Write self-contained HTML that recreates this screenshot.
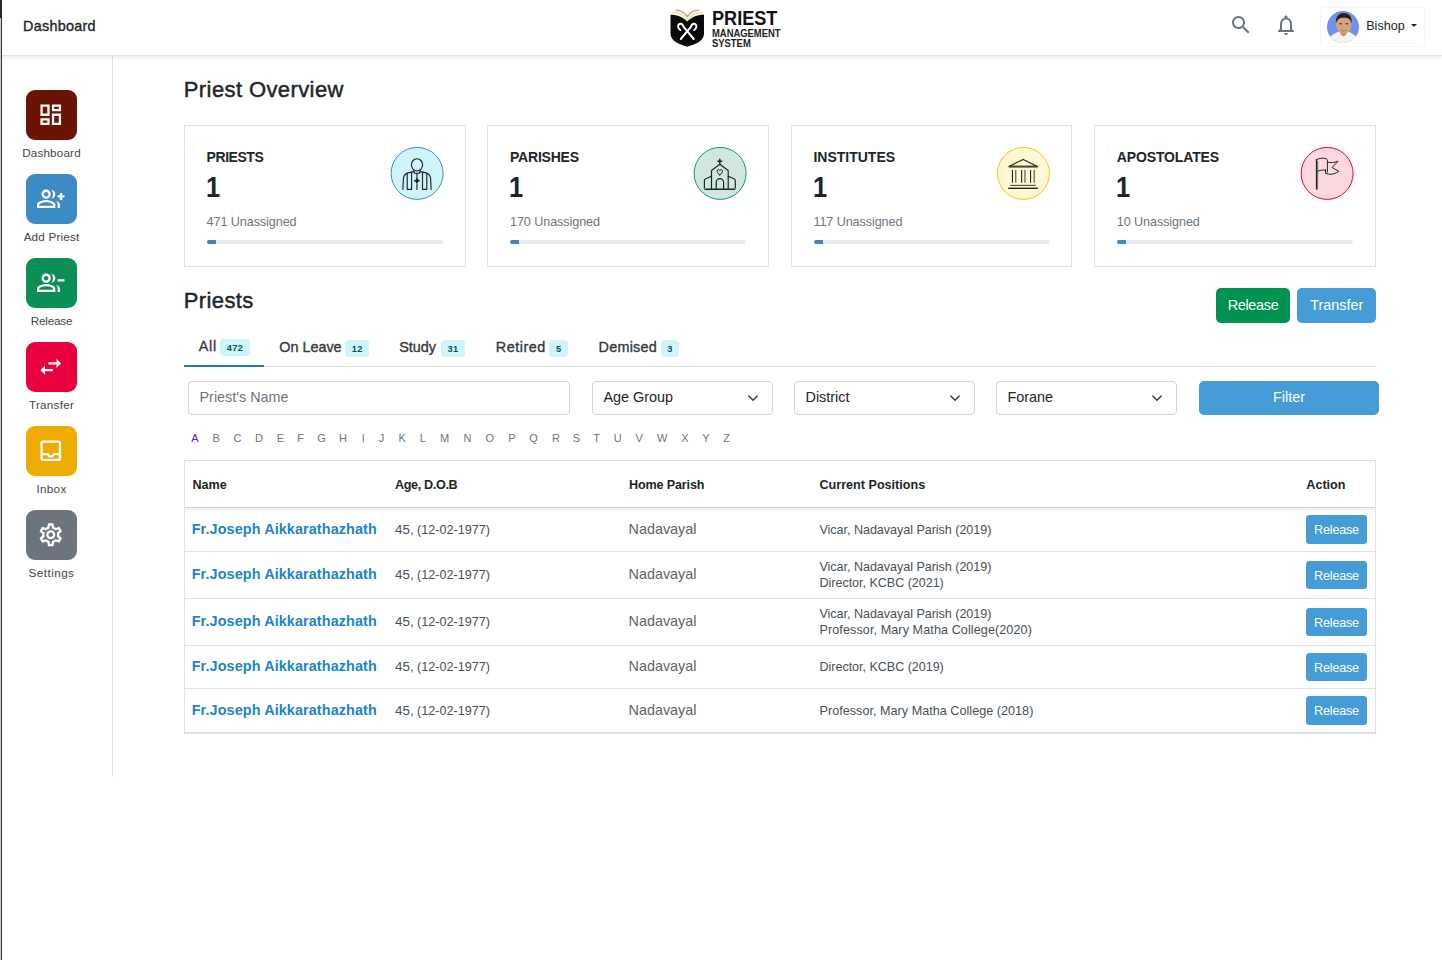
<!DOCTYPE html>
<html lang="en">
<head>
<meta charset="utf-8">
<title>Priest Management System - Dashboard</title>
<style>
*{box-sizing:border-box;margin:0;padding:0}
html,body{width:1442px;height:960px;overflow:hidden;background:#fff}
body{font-family:"Liberation Sans",sans-serif;font-size:14.4px;color:#212529;position:relative;-webkit-font-smoothing:antialiased}
.abs{position:absolute}
.t{position:absolute;white-space:nowrap;line-height:1}
/* window edge artefact */
#edgeTop{left:0;top:0;width:2px;height:18px;background:#2b2b2b}
#edgeA{left:0;top:18px;width:1px;height:942px;background:#cfcfcf}
#edgeB{left:1px;top:18px;width:1px;height:942px;background:#333}
/* header */
#hdr{left:2px;top:0;width:1440px;height:56px;background:#fff;border-bottom:1px solid #dfe2e7;box-shadow:0 2px 4px rgba(0,0,0,.075);z-index:5}
#hdrTitle{left:21.100px;top:18.500px;font-size:14.400px;font-weight:400;color:#212529;-webkit-text-stroke:.35px #212529;letter-spacing:.25px}
/* sidebar */
#side{left:2px;top:56px;width:111px;height:721px;border-right:1px solid #dee2e6;background:#fff}
.tile{position:absolute;left:26px;width:51px;height:50px;border-radius:9px}
.tile svg{position:absolute;left:11.400px;top:10.700px;width:27.500px;height:27.500px;fill:#fff}
.lbl{position:absolute;left:2px;width:100px;text-align:center;font-size:11.700px;line-height:14px;color:#454545}
/* headings */
.h3{font-size:22px;font-weight:400;color:#212529;-webkit-text-stroke:.45px #212529;letter-spacing:.4px}
/* cards */
.card{position:absolute;top:125px;width:281.8px;height:142px;border:1px solid #dee2e6;background:#fff}
.card .ttl{left:var(--tl);top:24.300px;font-size:14px;font-weight:700;color:#212529}
.card .num{left:calc(var(--tl) - .6px);top:45.600px;font-size:30px;font-weight:700;color:#212529;transform:scaleX(.85);transform-origin:0 0}
.card .sub{left:var(--tl);top:90px;font-size:12.600px;color:#6c757d;letter-spacing:-.08px}
.card .bar{position:absolute;left:calc(var(--tl) + .4px);top:114px;width:236px;height:4px;border-radius:2px;background:#e9ecef;overflow:hidden}
.card .bar i{display:block;width:9px;height:4px;background:#3a87c2}
.card .ico{position:absolute;left:var(--il);top:20px;width:55px;height:55px}
.card .ico svg{position:absolute;left:0;top:0;width:55px;height:55px;overflow:visible}
/* buttons */
.btn{position:absolute;color:#fff;text-align:center;border-radius:5px;font-size:14.4px;white-space:nowrap}
.b-green{background:#009250}
.b-blue{background:#459cd6}
/* tabs */
#tabline{left:184px;top:366px;width:1192px;height:1px;background:#dee2e6}
#tabactive{left:184px;top:365px;width:80px;height:2px;background:#2a7ab8}
.tab{font-size:14.4px;color:#343a40;-webkit-text-stroke:.35px #343a40}
.bdg{position:absolute;top:339px;height:17px;border-radius:4px;background:#cff4fc;color:#055160;font-size:9.200px;font-weight:700;text-align:center;line-height:17px;letter-spacing:.4px;padding:1px 0 0 .4px}
/* form controls */
.ctl{position:absolute;top:381px;height:34px;border:1px solid #ced4da;border-radius:4px;background:#fff;font-size:14.400px;line-height:30px;padding-left:10.500px;white-space:nowrap}
.ctl svg{position:absolute;right:13.900px;top:13.400px;width:10px;height:6px}
.ph{color:#6c757d}
/* alphabet */
.az{position:absolute;top:431px;width:20px;margin-left:-10px;text-align:center;font-size:11px;line-height:14px;color:#6c757d}
/* table */
#tbl{left:184px;top:460px;width:1192px;height:274px;border:1px solid #dee2e6;border-bottom-width:2px}
.hl{position:absolute;left:184px;width:1192px;height:1px;background:#dee2e6}
.th{font-size:12.6px;font-weight:700;color:#212529}
.nm{font-size:14.400px;font-weight:700;color:#1c84c9;letter-spacing:.1px;margin-left:-.8px}
.age{font-size:12.6px;color:#495057}
.age b{font-weight:400;font-size:13.4px}
.hp{font-size:14.400px;color:#5c636a;margin-left:-.5px}
.pos{font-size:12.600px;color:#495057;letter-spacing:-.05px}
</style>
</head>
<body>
<div class="abs" id="edgeTop"></div><div class="abs" id="edgeA"></div><div class="abs" id="edgeB"></div>

<!-- HEADER -->
<div class="abs" id="hdr">
  <div class="t" id="hdrTitle">Dashboard</div>
  <svg class="abs" id="logo" style="left:662px;top:4px;width:48px;height:48px" viewBox="0 0 48 48">
    <path d="M12 6.2 C16 6 20.5 8.5 23.25 12.5 C26 8.5 30.5 6 34.6 6.2" fill="none" stroke="#b9b184" stroke-width="1.5" stroke-linecap="round"/>
    <path d="M8.9 8.6 C14 8.4 19.5 11 23.25 16 C27 11 32.5 8.4 37.5 8.6" fill="none" stroke="#ebe5ae" stroke-width="2" stroke-linecap="round"/>
    <path d="M6.5 10.8 C13 10.6 19 13 23.25 17.6 C27.5 13 33.5 10.6 40 10.8 L40 29.500 C40 37 31 40.700 23.250 42.700 C15.500 40.700 6.500 37 6.500 29.500 Z" fill="#0a0a0a"/>
    <g fill="none" stroke="#fff" stroke-width="2" stroke-linecap="round" stroke-linejoin="round">
      <path d="M16.750 35 L26.900 22.800 C27.700 20 30 19 31.500 20.200 C33.200 21.600 32.500 24.600 30.200 26"/>
      <path d="M29.750 35 L19.600 22.800 C18.800 20 16.500 19 15 20.200 C13.300 21.600 14 24.600 16.300 26"/>
    </g>
  </svg>
  <div class="t" id="lg1" style="left:710.200px;top:7.800px;font-size:20.700px;font-weight:700;color:#111;transform:scaleX(.875);transform-origin:0 0">PRIEST</div>
  <div class="t" id="lg2" style="left:710.300px;top:28.600px;font-size:10.300px;font-weight:700;color:#222;transform:scaleX(.915);transform-origin:0 0">MANAGEMENT</div>
  <div class="t" id="lg3" style="left:710.300px;top:38.700px;font-size:10.300px;font-weight:700;color:#222;transform:scaleX(.915);transform-origin:0 0">SYSTEM</div>
  <svg class="abs" id="icSearch" style="left:1227px;top:13.3px;width:24px;height:24px" viewBox="0 0 24 24" fill="#6c757d"><path d="M15.5 14h-.79l-.28-.27C15.41 12.59 16 11.11 16 9.500 16 5.910 13.090 3 9.500 3S3 5.910 3 9.500 5.910 16 9.500 16c1.610 0 3.090-.59 4.230-1.570l.27.28v.79l5 4.990L20.490 19l-4.990-5zm-6 0C7.010 14 5 11.990 5 9.500S7.010 5 9.500 5 14 7.010 14 9.500 11.990 14 9.500 14z"/></svg>
  <svg class="abs" id="icBell" style="left:1272px;top:12.700px;width:24px;height:24px" viewBox="0 0 24 24" fill="#6c757d"><path d="M12 22c1.100 0 2-.9 2-2h-4c0 1.100.9 2 2 2zm6-6v-5c0-3.070-1.630-5.640-4.500-6.320V4c0-.83-.67-1.500-1.500-1.500s-1.500.67-1.500 1.500v.68C7.640 5.360 6 7.920 6 11v5l-2 2v1h16v-1l-2-2zm-2 1H8v-6c0-2.480 1.510-4.500 4-4.500s4 2.020 4 4.500v6z"/></svg>
  <div class="abs" id="userBtn" style="left:1317.500px;top:7px;width:105px;height:40px;border:1px solid #f4f6f7;border-radius:4px"></div>
  <svg class="abs" id="avatar" style="left:1325px;top:11px;width:32px;height:32px" viewBox="0 0 32 32">
    <defs><clipPath id="avc"><circle cx="16" cy="16" r="16"/></clipPath></defs>
    <g clip-path="url(#avc)">
      <rect width="32" height="32" fill="#6f93ea"/>
      <path d="M0 32 C.500 26 5 23.500 12.500 20.500 L21 20.500 C27.500 23.500 31.500 26 32 32 Z" fill="#f6f4f1"/>
      <path d="M13.500 19 L19.500 19 L19.500 23.500 L16.500 25.500 L13.500 23.500 Z" fill="#c98e6c"/>
      <ellipse cx="16.700" cy="13.600" rx="7.600" ry="9.400" fill="#d7a27e"/>
      <path d="M9 12.500 C8.200 5 12.500 1.800 17 2 C22 2.200 25.500 5.500 24.500 12.500 C23.500 8.500 21.500 6.800 17 6.800 C12.500 6.800 10.200 8.500 9 12.500 Z" fill="#2b201b"/>
      <ellipse cx="13.600" cy="12.700" rx="1.500" ry=".7" fill="#5a3a2c"/><ellipse cx="19.800" cy="12.700" rx="1.500" ry=".7" fill="#5a3a2c"/>
      <path d="M13.800 19.200 Q16.700 21 19.600 19.200" stroke="#b0706a" stroke-width=".9" fill="none"/>
    </g>
  </svg>
  <div class="t" id="userName" style="left:1364.200px;top:19.600px;font-size:12.600px;color:#212529">Bishop</div>
  <div class="abs" id="caret" style="left:1409px;top:24px;width:0;height:0;border-left:3px solid transparent;border-right:3px solid transparent;border-top:3.500px solid #212529"></div>
</div>

<!-- SIDEBAR -->
<div class="abs" id="side">
  <div class="tile" style="top:34px;left:24px;background:#6b1404"><svg viewBox="0 0 24 24"><path d="M19 5v2h-4V5h4M9 5v6H5V5h4m10 8v6h-4v-6h4M9 17v2H5v-2h4M21 3h-8v6h8V3zM11 3H3v10h8V3zm10 8h-8v10h8V11zm-10 4H3v6h8v-6z"/></svg></div>
  <div class="lbl" style="top:90px;left:-0.5px;letter-spacing:0.17px">Dashboard</div>
  <div class="tile" style="top:118px;left:24px;background:#3d8bc4"><svg viewBox="0 0 24 24"><path d="M22 9V7h-2v2h-2v2h2v2h2v-2h2V9zM8 12c2.21 0 4-1.79 4-4s-1.79-4-4-4-4 1.79-4 4 1.79 4 4 4zm0-6c1.1 0 2 .9 2 2s-.9 2-2 2-2-.9-2-2 .9-2 2-2zm0 7c-2.67 0-8 1.34-8 4v3h16v-3c0-2.66-5.33-4-8-4zm6 5H2v-.99C2.2 16.29 5.3 15 8 15s5.8 1.29 6 2v1zM12.51 4.05C13.43 5.11 14 6.49 14 8s-.57 2.89-1.49 3.95C14.47 11.7 16 10.04 16 8s-1.53-3.7-3.49-3.95zm4.02 9.78C17.42 14.66 18 15.7 18 17v3h2v-3c0-1.45-1.59-2.51-3.47-3.17z"/></svg></div>
  <div class="lbl" style="top:174px;left:-0.5px;letter-spacing:0.18px">Add Priest</div>
  <div class="tile" style="top:202px;left:24px;background:#0b8f56"><svg viewBox="0 0 24 24"><path d="M24 9v2h-6V9h6zM8 12c2.21 0 4-1.79 4-4s-1.79-4-4-4-4 1.79-4 4 1.79 4 4 4zm0-6c1.1 0 2 .9 2 2s-.9 2-2 2-2-.9-2-2 .9-2 2-2zm0 7c-2.67 0-8 1.34-8 4v3h16v-3c0-2.66-5.33-4-8-4zm6 5H2v-.99C2.2 16.29 5.3 15 8 15s5.8 1.29 6 2v1zM12.51 4.05C13.43 5.11 14 6.49 14 8s-.57 2.89-1.49 3.95C14.47 11.7 16 10.04 16 8s-1.53-3.7-3.49-3.95zm4.02 9.78C17.42 14.66 18 15.7 18 17v3h2v-3c0-1.45-1.59-2.51-3.47-3.17z"/></svg></div>
  <div class="lbl" style="top:258px;left:-0.5px;letter-spacing:-0.2px">Release</div>
  <div class="tile" style="top:286px;left:24px;background:#e8003f"><svg viewBox="0 0 24 24"><path d="M6.99 11 3 15l3.99 4v-3H14v-2H6.99v-3zM21 9l-3.99-4v3H10v2h7.01v3L21 9z"/></svg></div>
  <div class="lbl" style="top:342px;left:-0.5px;letter-spacing:0.25px">Transfer</div>
  <div class="tile" style="top:370px;left:24px;background:#edab03"><svg viewBox="0 0 24 24"><path d="M19 3H5c-1.1 0-2 .9-2 2v14c0 1.1.89 2 2 2h14c1.1 0 2-.9 2-2V5c0-1.1-.9-2-2-2zm0 16H5v-3h3.56c.69 1.19 1.97 2 3.45 2s2.75-.81 3.45-2H19v3zm0-5h-4.99c0 1.1-.9 2-2 2s-2-.9-2-2H5V5h14v9z"/></svg></div>
  <div class="lbl" style="top:426px;left:-0.5px;letter-spacing:0.3px">Inbox</div>
  <div class="tile" style="top:454px;left:24px;background:#6c757d"><svg viewBox="0 0 24 24"><path d="M19.43 12.98c.04-.32.07-.64.07-.98 0-.34-.03-.66-.07-.98l2.11-1.65c.19-.15.24-.42.12-.64l-2-3.46c-.09-.16-.26-.25-.44-.25-.06 0-.12.01-.17.03l-2.49 1c-.52-.4-1.08-.73-1.69-.98l-.38-2.65C14.46 2.18 14.25 2 14 2h-4c-.25 0-.46.18-.49.42l-.38 2.65c-.61.25-1.17.59-1.69.98l-2.49-1c-.06-.02-.12-.03-.18-.03-.17 0-.34.09-.43.25l-2 3.46c-.13.22-.07.49.12.64l2.11 1.65c-.04.32-.07.65-.07.98 0 .33.03.66.07.98l-2.11 1.65c-.19.15-.24.42-.12.64l2 3.46c.09.16.26.25.44.25.06 0 .12-.01.17-.03l2.49-1c.52.4 1.08.73 1.69.98l.38 2.65c.03.24.24.42.49.42h4c.25 0 .46-.18.49-.42l.38-2.65c.61-.25 1.17-.59 1.69-.98l2.49 1c.06.02.12.03.18.03.17 0 .34-.09.43-.25l2-3.46c.12-.22.07-.49-.12-.64l-2.11-1.65zm-1.98-1.71c.04.31.05.52.05.73 0 .21-.02.43-.05.73l-.14 1.13.89.7 1.08.84-.7 1.21-1.27-.51-1.04-.42-.9.68c-.43.32-.84.56-1.25.73l-1.06.43-.16 1.13-.2 1.35h-1.4l-.19-1.35-.16-1.13-1.06-.43c-.43-.18-.83-.41-1.23-.71l-.91-.7-1.06.43-1.27.51-.7-1.21 1.08-.84.89-.7-.14-1.13c-.03-.31-.05-.54-.05-.74s.02-.43.05-.73l.14-1.13-.89-.7-1.08-.84.7-1.21 1.27.51 1.04.42.9-.68c.43-.32.84-.56 1.25-.73l1.06-.43.16-1.13.2-1.35h1.39l.19 1.35.16 1.13 1.06.43c.43.18.83.41 1.23.71l.91.7 1.06-.43 1.27-.51.7 1.21-1.07.85-.89.7.14 1.13zM12 8c-2.21 0-4 1.79-4 4s1.79 4 4 4 4-1.79 4-4-1.79-4-4-4zm0 6c-1.1 0-2-.9-2-2s.9-2 2-2 2 .9 2 2-.9 2-2 2z"/></svg></div>
  <div class="lbl" style="top:510px;left:-0.5px;letter-spacing:0.45px">Settings</div>
</div>

<!-- MAIN -->
<div class="t h3" id="h1" style="left:183.800px;top:79px">Priest Overview</div>
<div class="card" style="left:184px;width:282px;--tl:21.6px;--il:205px">
  <div class="t ttl" style="letter-spacing:-0.45px">PRIESTS</div>
  <div class="t num">1</div>
  <div class="t sub">471 Unassigned</div>
  <div class="bar"><i></i></div>
  <div class="ico">
    <svg viewBox="0 0 55 55" fill="none" stroke="#1f2326" stroke-width="1.150" stroke-linecap="round" stroke-linejoin="round">
      <circle cx="27.100" cy="27.400" r="26" stroke-linecap="butt" fill="#cff4fc" stroke="#3d8bc4" stroke-width="1"/>
      <g transform="translate(1.100,1.400)">
      <ellipse cx="25.900" cy="17.400" rx="5.600" ry="6.100"/>
      <path d="M22.500 23.300 L23.300 25.800 H28.400 L29.200 23.300"/>
      <path d="M11.800 42 L12.300 31 C12.600 28 14.500 26.300 16.800 25.500 L22.700 24.200 M40 42 L39.500 31 C39.200 28 37.300 26.300 35 25.500 L29.100 24.200"/>
      <path d="M16.100 26 V41.900 H20.500 V24.900 M31.400 24.900 V41.900 H35.700 V26"/>
      <path d="M25.850 25.800 V30.800 M25.850 36.400 V42"/>
      <path d="M25.850 30.900 V35.900 M23.200 33.300 H28.500" stroke-width="2" stroke-linecap="butt"/>
    </g>
    </svg>
  </div>
</div>
<div class="card" style="left:487px;width:282px;--tl:22px;--il:205px">
  <div class="t ttl" style="letter-spacing:-0.21px">PARISHES</div>
  <div class="t num">1</div>
  <div class="t sub">170 Unassigned</div>
  <div class="bar"><i></i></div>
  <div class="ico">
    <svg viewBox="0 0 55 55" fill="none" stroke="#1f2326" stroke-width="1.200" stroke-linecap="round" stroke-linejoin="round">
      <circle cx="27.100" cy="27.400" r="26" stroke-linecap="butt" fill="#d1e7dd" stroke="#0b9a5f" stroke-width="1"/>
      <g transform="translate(1.100,1.400)">
      <path d="M25.700 11.800 V17 M23.800 13.900 H27.600" stroke-width="1.500"/>
      <path d="M17.400 41.500 V23 L25.700 16.800 L34.100 23 V41.500"/>
      <path d="M17.400 28.900 L11.600 31.300 Q10.300 31.900 10.300 33.300 V40.500 M34.100 28.900 L39.900 31.300 Q41.200 31.900 41.200 33.300 V40.500"/>
      <path d="M22.100 41.500 V35 A3.700 3.700 0 0 1 29.500 35 V41.500"/>
      <path d="M25.700 27.500 C23.500 26 22.800 24.500 23.100 23.300 C23.500 21.900 25.100 21.900 25.700 23.100 C26.300 21.900 27.900 21.900 28.300 23.300 C28.600 24.500 27.900 26 25.700 27.500 Z" stroke-width="1"/>
      <path d="M11 41.900 H40.500" stroke-width="1.600"/>
    </g>
    </svg>
  </div>
</div>
<div class="card" style="left:791px;width:281px;--tl:21.4px;--il:204px">
  <div class="t ttl" style="letter-spacing:0px">INSTITUTES</div>
  <div class="t num">1</div>
  <div class="t sub">117 Unassigned</div>
  <div class="bar"><i></i></div>
  <div class="ico">
    <svg viewBox="0 0 55 55" fill="none" stroke="#1f2326" stroke-width="1.100" stroke-linecap="butt" stroke-linejoin="round">
      <circle cx="27.450" cy="27.400" r="26" stroke-linecap="butt" fill="#fff8d2" stroke="#ffc107" stroke-width="1"/>
      <g transform="translate(1.450,1.400)">
      <path d="M11.500 19 L25.800 12 L40 19 Z" />
      <path d="M11.300 19.300 H40.200" stroke-width="1.800" stroke="#4a463a"/>
      <path d="M15 22.600 V35.300 M24.200 22.600 V35.300 M33.100 22.600 V35.300"/>
      <path d="M18.300 22.600 V35.300 M27.500 22.600 V35.300 M36.700 22.600 V35.300" stroke="#6b675a" stroke-width="1.300"/>
      <path d="M12.900 38 H38.300" stroke="#4a463a" stroke-width="1.100"/>
      <path d="M10.800 40.900 H40.400" stroke-width="1.400"/>
    </g>
    </svg>
  </div>
</div>
<div class="card" style="left:1094px;width:282px;--tl:21.8px;--il:205px">
  <div class="t ttl" style="letter-spacing:-0.14px">APOSTOLATES</div>
  <div class="t num">1</div>
  <div class="t sub">10 Unassigned</div>
  <div class="bar"><i></i></div>
  <div class="ico">
    <svg viewBox="0 0 55 55" fill="none" stroke="#1f2326" stroke-width="1" stroke-linecap="round" stroke-linejoin="round">
      <circle cx="27.100" cy="27.400" r="26" stroke-linecap="butt" fill="#fdd8de" stroke="#e8003f" stroke-width="1"/>
      <g transform="translate(1.100,1.400)">
      <path d="M15.400 12.200 V41.700" stroke-width="1.300"/>
      <path d="M16.600 14 V41.700" stroke="#7a5f63" stroke-width="1"/>
      <path d="M15.400 12.200 C18.500 10.600 22.500 10.300 25.200 11.400 Q26.300 11.900 26.300 13.200 V24.800"/>
      <path d="M15.600 24.200 C18.500 22.800 21.500 22.400 24.400 22.700"/>
      <path d="M26.300 14.700 C29.500 15.700 33 15.300 36.800 13.900 L31 20.100 L37.600 23.900 C34.500 26.300 30.500 27.300 27.500 26.800 L24.400 25.900 V22.700"/>
    </g>
    </svg>
  </div>
</div>
<div class="t h3" id="h2" style="left:183.700px;top:290px">Priests</div>
<div class="btn b-green" id="btnRel" style="left:1216px;top:288px;width:74px;height:35px;line-height:35px;letter-spacing:-.3px">Release</div>
<div class="btn b-blue" id="btnTr" style="left:1297.400px;top:288px;width:78.600px;height:35px;line-height:35px">Transfer</div>
<div class="abs" id="tabline"></div><div class="abs" id="tabactive"></div>
<div class="t tab" id="tab0" style="left:198.8px;top:338.5px;letter-spacing:0.7px">All</div><div class="bdg" id="bdg0" style="left:220px;top:339px;width:29.8px">472</div>
<div class="t tab" id="tab1" style="left:279.2px;top:339.5px;letter-spacing:0px">On Leave</div><div class="bdg" id="bdg1" style="left:345.2px;top:340px;width:23.8px">12</div>
<div class="t tab" id="tab2" style="left:399.2px;top:339.5px;letter-spacing:0px">Study</div><div class="bdg" id="bdg2" style="left:441px;top:340px;width:23.8px">31</div>
<div class="t tab" id="tab3" style="left:495.7px;top:339.5px;letter-spacing:0.55px">Retired</div><div class="bdg" id="bdg3" style="left:549.1px;top:340px;width:18.9px">5</div>
<div class="t tab" id="tab4" style="left:598.5px;top:339.5px;letter-spacing:0.25px">Demised</div><div class="bdg" id="bdg4" style="left:660.7px;top:340px;width:18.3px">3</div>
<div class="ctl ph" id="inp" style="left:188px;width:382px">Priest's Name</div>
<div class="ctl" id="sel0" style="left:592px;width:181px">Age Group<svg viewBox="0 0 10 6"><path d="M.800 1 L5 5.200 L9.200 1" fill="none" stroke="#343a40" stroke-width="1.400" stroke-linecap="round" stroke-linejoin="round"/></svg></div>
<div class="ctl" id="sel1" style="left:794px;width:181px">District<svg viewBox="0 0 10 6"><path d="M.800 1 L5 5.200 L9.200 1" fill="none" stroke="#343a40" stroke-width="1.400" stroke-linecap="round" stroke-linejoin="round"/></svg></div>
<div class="ctl" id="sel2" style="left:996px;width:181px">Forane<svg viewBox="0 0 10 6"><path d="M.800 1 L5 5.200 L9.200 1" fill="none" stroke="#343a40" stroke-width="1.400" stroke-linecap="round" stroke-linejoin="round"/></svg></div>
<div class="btn b-blue" id="btnFil" style="left:1199px;top:381px;width:180px;height:34px;line-height:32.600px">Filter</div>
<div class="az" id="az0" style="left:194.85px; color:#6a0ff0;">A</div>
<div class="az" id="az1" style="left:216.15px;">B</div>
<div class="az" id="az2" style="left:237.6px;">C</div>
<div class="az" id="az3" style="left:258.9px;">D</div>
<div class="az" id="az4" style="left:280.45px;">E</div>
<div class="az" id="az5" style="left:300.6px;">F</div>
<div class="az" id="az6" style="left:321.5px;">G</div>
<div class="az" id="az7" style="left:343px;">H</div>
<div class="az" id="az8" style="left:363.2px;">I</div>
<div class="az" id="az9" style="left:381.5px;">J</div>
<div class="az" id="az10" style="left:402.2px;">K</div>
<div class="az" id="az11" style="left:422.7px;">L</div>
<div class="az" id="az12" style="left:444.5px;">M</div>
<div class="az" id="az13" style="left:467.5px;">N</div>
<div class="az" id="az14" style="left:489.8px;">O</div>
<div class="az" id="az15" style="left:512px;">P</div>
<div class="az" id="az16" style="left:533.5px;">Q</div>
<div class="az" id="az17" style="left:555.9px;">R</div>
<div class="az" id="az18" style="left:576.3px;">S</div>
<div class="az" id="az19" style="left:596.5px;">T</div>
<div class="az" id="az20" style="left:617.7px;">U</div>
<div class="az" id="az21" style="left:639.2px;">V</div>
<div class="az" id="az22" style="left:662.3px;">W</div>
<div class="az" id="az23" style="left:684.9px;">X</div>
<div class="az" id="az24" style="left:705.9px;">Y</div>
<div class="az" id="az25" style="left:726.6px;">Z</div>
<div class="abs" id="tbl"></div>
<div class="abs" id="thline" style="left:185px;top:507px;width:1190px;height:1px;background:#ced3d8"></div><div class="abs" id="thshadow" style="left:185px;top:508px;width:1190px;height:5px;background:linear-gradient(#efefef,#f4f4f4 35%,#fbfbfb 70%,#fff)"></div>
<div class="hl" style="top:551px"></div>
<div class="hl" style="top:598px"></div>
<div class="hl" style="top:645px"></div>
<div class="hl" style="top:688px"></div>
<div class="t th" id="th0" style="left:192.5px;top:479.0px">Name</div>
<div class="t th" id="th1" style="letter-spacing:-.35px;left:395px;top:479.0px">Age, D.O.B</div>
<div class="t th" id="th2" style="letter-spacing:-.15px;left:629px;top:479.0px">Home Parish</div>
<div class="t th" id="th3" style="left:819.5px;top:479.0px">Current Positions</div>
<div class="t th" id="th4" style="left:1306.3px;top:479.0px">Action</div>
<div class="t nm" id="nm0" style="left:192.500px;top:521.5px">Fr.Joseph Aikkarathazhath</div>
<div class="t age" id="age0" style="left:395px;top:522.5px"><b>45,</b> (12-02-1977)</div>
<div class="t hp" id="hp0" style="left:629px;top:521.5px">Nadavayal</div>
<div class="t pos" id="pos0a" style="left:819.500px;top:523.5px">Vicar, Nadavayal Parish (2019)</div>
<div class="btn b-blue rb" id="rb0" style="left:1306px;top:515px;width:61px;height:29px;line-height:29px;padding-top:1px;font-size:12.600px;border-radius:3.500px;letter-spacing:-.2px">Release</div>
<div class="t nm" id="nm1" style="left:192.500px;top:567.0px">Fr.Joseph Aikkarathazhath</div>
<div class="t age" id="age1" style="left:395px;top:568.0px"><b>45,</b> (12-02-1977)</div>
<div class="t hp" id="hp1" style="left:629px;top:567.0px">Nadavayal</div>
<div class="t pos" id="pos1a" style="left:819.500px;top:561.0px">Vicar, Nadavayal Parish (2019)</div>
<div class="t pos" id="pos1b" style="left:819.500px;top:577.0px">Director, KCBC (2021)</div>
<div class="btn b-blue rb" id="rb1" style="left:1306px;top:560.7px;width:61px;height:28.4px;line-height:28.4px;padding-top:1px;font-size:12.600px;border-radius:3.500px;letter-spacing:-.2px">Release</div>
<div class="t nm" id="nm2" style="left:192.500px;top:614.0px">Fr.Joseph Aikkarathazhath</div>
<div class="t age" id="age2" style="left:395px;top:615.0px"><b>45,</b> (12-02-1977)</div>
<div class="t hp" id="hp2" style="left:629px;top:614.0px">Nadavayal</div>
<div class="t pos" id="pos2a" style="left:819.500px;top:608.0px">Vicar, Nadavayal Parish (2019)</div>
<div class="t pos" id="pos2b" style="left:819.500px;top:624.0px"><span style="letter-spacing:.09px">Professor, Mary Matha College(2020)</span></div>
<div class="btn b-blue rb" id="rb2" style="left:1306px;top:607.9px;width:61px;height:28.4px;line-height:28.4px;padding-top:1px;font-size:12.600px;border-radius:3.500px;letter-spacing:-.2px">Release</div>
<div class="t nm" id="nm3" style="left:192.500px;top:659.0px">Fr.Joseph Aikkarathazhath</div>
<div class="t age" id="age3" style="left:395px;top:660.0px"><b>45,</b> (12-02-1977)</div>
<div class="t hp" id="hp3" style="left:629px;top:659.0px">Nadavayal</div>
<div class="t pos" id="pos3a" style="left:819.500px;top:661.0px">Director, KCBC (2019)</div>
<div class="btn b-blue rb" id="rb3" style="left:1306px;top:652.9px;width:61px;height:28.4px;line-height:28.4px;padding-top:1px;font-size:12.600px;border-radius:3.500px;letter-spacing:-.2px">Release</div>
<div class="t nm" id="nm4" style="left:192.500px;top:702.5px">Fr.Joseph Aikkarathazhath</div>
<div class="t age" id="age4" style="left:395px;top:703.5px"><b>45,</b> (12-02-1977)</div>
<div class="t hp" id="hp4" style="left:629px;top:702.5px">Nadavayal</div>
<div class="t pos" id="pos4a" style="left:819.500px;top:704.5px"><span style="letter-spacing:.03px">Professor, Mary Matha College (2018)</span></div>
<div class="btn b-blue rb" id="rb4" style="left:1306px;top:696px;width:61px;height:29px;line-height:29px;padding-top:1px;font-size:12.600px;border-radius:3.500px;letter-spacing:-.2px">Release</div>
</body>
</html>
